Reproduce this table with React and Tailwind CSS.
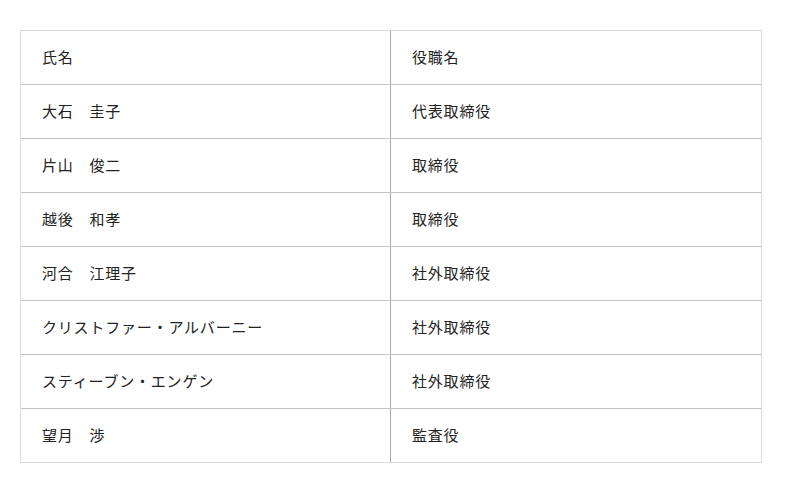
const rows = [
  ["氏名", "役職名"],
  ["大石　圭子", "代表取締役"],
  ["片山　俊二", "取締役"],
  ["越後　和孝", "取締役"],
  ["河合　江理子", "社外取締役"],
  ["クリストファー・アルバーニー", "社外取締役"],
  ["スティーブン・エンゲン", "社外取締役"],
  ["望月　渉", "監査役"],
];

export default function App() {
  return (
    <div
      className="w-[800px] h-[493px] bg-white pt-[30px] pl-[20px]"
      style={{ fontFamily: '"Noto Sans CJK JP", "Noto Sans", sans-serif' }}
    >
      <div className="w-[742px] border border-[#dcdcdc] text-[15px] tracking-[0.8px] text-[#222]">
        {rows.map(([name, role], i) => (
          <div
            key={i}
            className={i > 0 ? "flex h-[54px] border-t border-[#c4c4c4]" : "flex h-[53px]"}
          >
            <div className="w-[370px] flex items-center pl-[21px] border-r border-[#a8a8a8]">
              {name}
            </div>
            <div className="flex-1 flex items-center pl-[21px]">{role}</div>
          </div>
        ))}
      </div>
    </div>
  );
}
